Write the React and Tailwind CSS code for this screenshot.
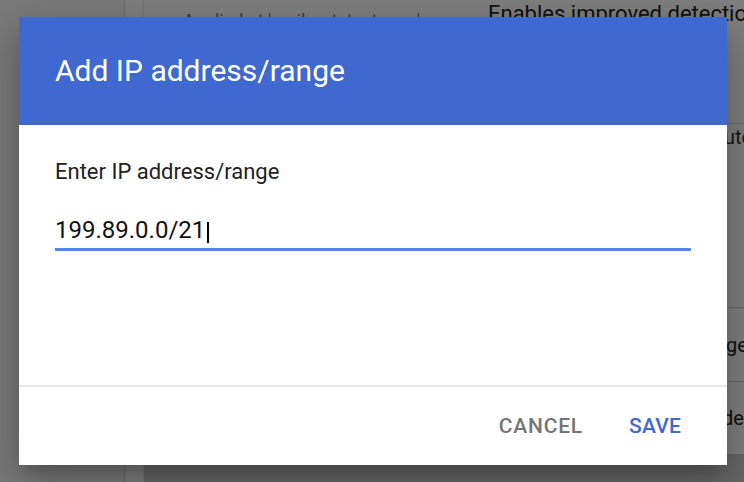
import React from "react";

export default function App() {
  return (
    <div
      className="relative w-[744px] h-[482px] overflow-hidden bg-white"
      style={{ fontFamily: "Roboto, 'Noto Sans', Arial, sans-serif" }}
    >
      {/* Background page */}
      <div className="flex h-full w-full">
        <div className="w-[125px] shrink-0 h-full bg-[#f7f7f7] border-r border-[#d6d6d6]" />
        <div className="w-[19px] shrink-0 h-full border-r border-[#e8e8e8]" />
        <div className="flex-1 min-w-0 flex flex-col">
          <div className="flex h-[30px] overflow-hidden">
            <div className="w-[344px] shrink-0 pl-[39px] pt-[10px] text-[18px] text-[#777] leading-[22px] whitespace-nowrap">
              Applied at 'mailroutetest.com'
            </div>
            <div className="flex-1 min-w-0 pt-[1px] text-[22px] text-[#222] leading-[26px] whitespace-nowrap overflow-hidden">
              Enables improved detection
            </div>
          </div>
          <div className="flex-1 flex flex-col">
            <div className="w-full h-[94px] border-b border-[#dcdcdc]" />
            <div className="w-full flex justify-end h-[183px]">
              <span className="text-[20px] text-[#333] leading-[24px] pt-[1px] w-[20px] overflow-hidden whitespace-nowrap">ute</span>
            </div>
            <div className="w-full h-[74px] border-t border-[#cfcfcf] flex items-center justify-end">
              <span className="text-[20px] text-[#222] w-[18px] overflow-hidden whitespace-nowrap">ges</span>
            </div>
            <div className="w-full h-[73px] border-t border-[#cfcfcf] flex items-center justify-end">
              <span className="text-[20px] text-[#222] w-[22px] overflow-hidden whitespace-nowrap">de</span>
            </div>
            <div className="w-full flex-1 border-t border-[#cfcfcf] bg-[#d0d0d0]" />
          </div>
        </div>
      </div>

      {/* Overlay + dialog */}
      <div className="absolute inset-0 bg-black/50 flex items-center justify-center">
        <div className="ml-[2px] w-[708px] h-[448px] bg-white flex flex-col shadow-[0_11px_15px_-7px_rgba(0,0,0,0.2),0_24px_38px_3px_rgba(0,0,0,0.14),0_9px_46px_8px_rgba(0,0,0,0.12)]">
          <div className="h-[108px] bg-[#4068d1] flex items-center pl-[36px]">
            <h2 className="text-white text-[30px] leading-[36px] font-normal">
              Add IP address/range
            </h2>
          </div>
          <div className="h-[260px] pl-[36px] pr-[36px] pt-[33px]">
            <div className="text-[22px] leading-[28px] text-[#222]">Enter IP address/range</div>
            <div className="mt-[28px] border-b-[3px] border-[#5385ef] pb-[2px] flex items-start">
              <span className="text-[24px] leading-[32px] text-[#111]">199.89.0.0/21</span>
              <span className="ml-[2px] w-[2px] h-[21px] bg-black mt-[8px]" />
            </div>
          </div>
          <div className="h-[2px] bg-[#e6e6e6]" />
          <div className="flex-1 flex items-center justify-end pr-[46px] gap-[46px]">
            <button className="text-[21px] font-medium text-[#757575] tracking-[0.8px] leading-[28px]">
              CANCEL
            </button>
            <button className="text-[21px] font-medium text-[#3f69d6] tracking-[0.2px] leading-[28px]">
              SAVE
            </button>
          </div>
        </div>
      </div>
    </div>
  );
}
